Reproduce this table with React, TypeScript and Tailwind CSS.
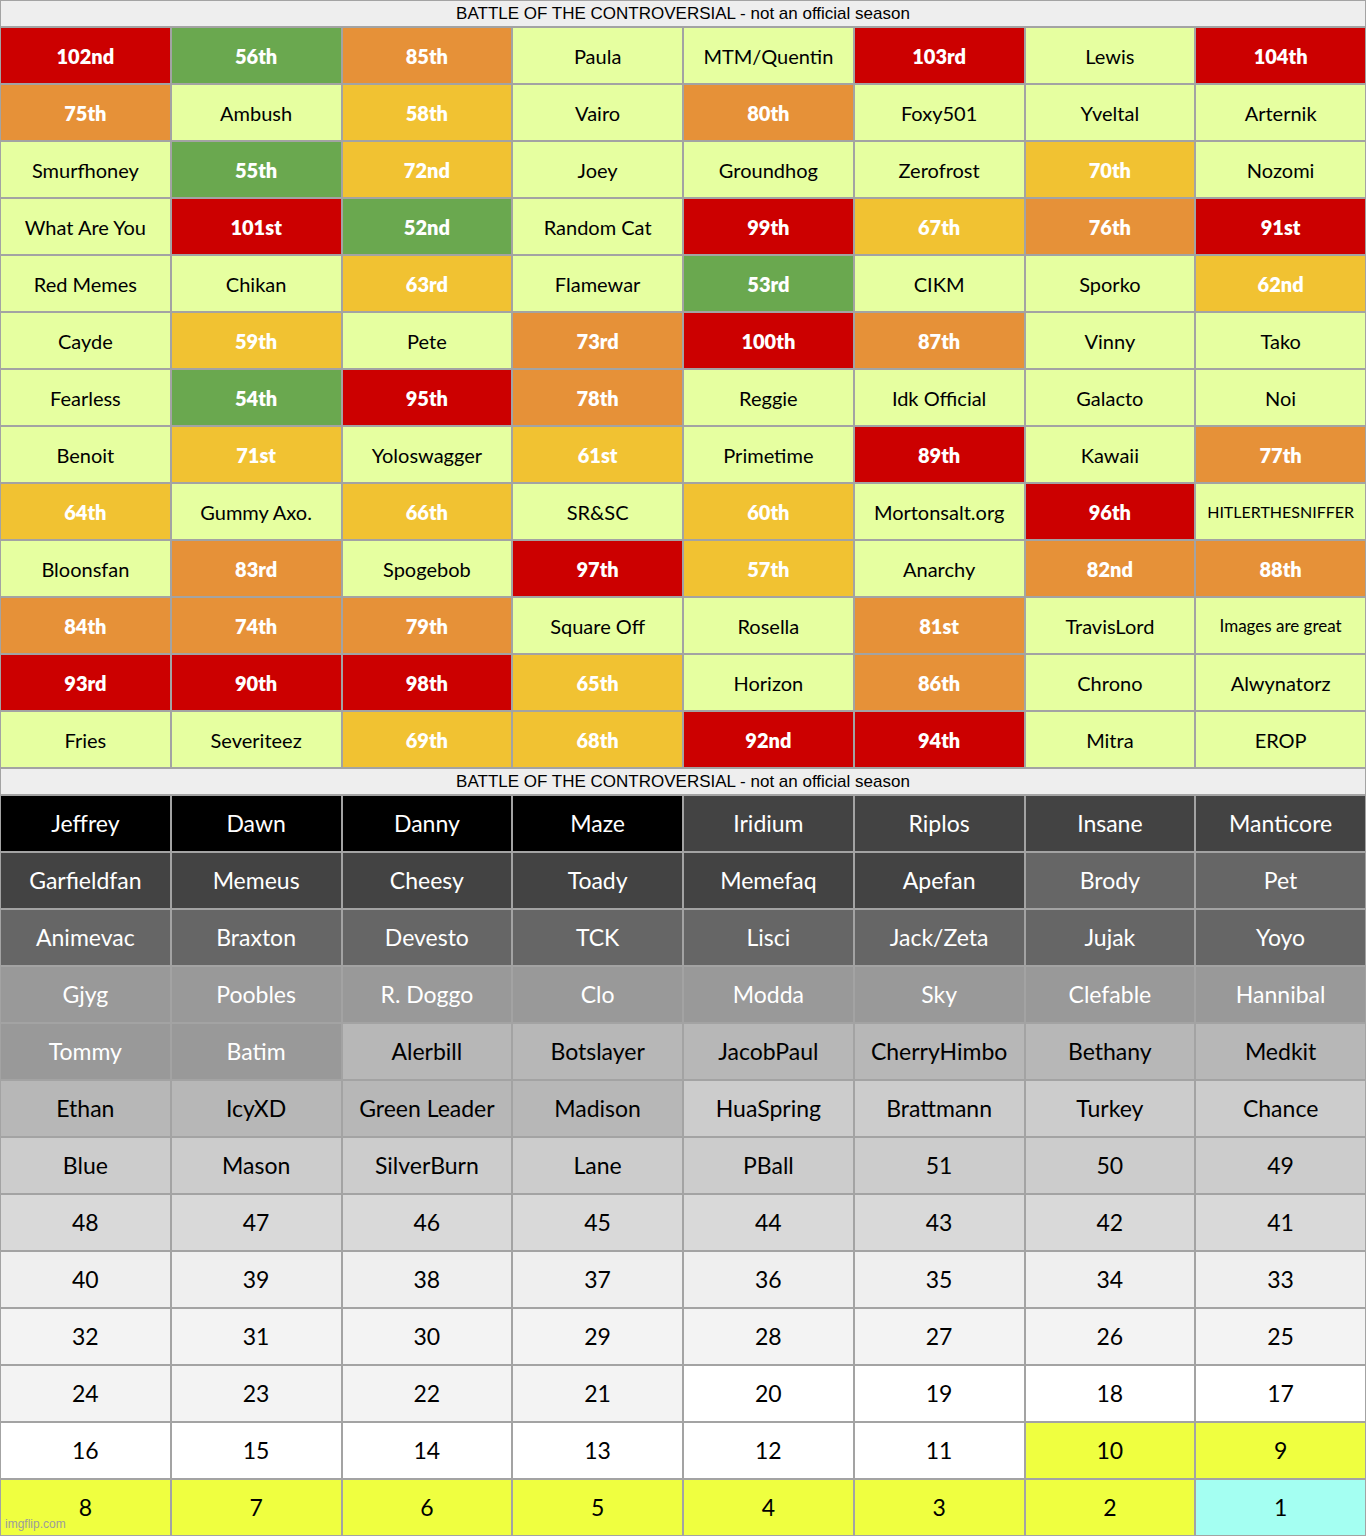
import React from "react";

type Cell = [string, string];

// colour keys for the rank board
const rankBg: Record<string, string> = {
  R: "bg-[#cc0000] text-white font-extrabold",
  G: "bg-[#6aa84f] text-white font-extrabold",
  O: "bg-[#e69138] text-white font-extrabold",
  Y: "bg-[#f1c232] text-white font-extrabold",
  L: "bg-[#e6ffa0] text-black",
};

const top: Cell[][] = [
  [["102nd", "R"], ["56th", "G"], ["85th", "O"], ["Paula", "L"], ["MTM/Quentin", "L"], ["103rd", "R"], ["Lewis", "L"], ["104th", "R"]],
  [["75th", "O"], ["Ambush", "L"], ["58th", "Y"], ["Vairo", "L"], ["80th", "O"], ["Foxy501", "L"], ["Yveltal", "L"], ["Arternik", "L"]],
  [["Smurfhoney", "L"], ["55th", "G"], ["72nd", "Y"], ["Joey", "L"], ["Groundhog", "L"], ["Zerofrost", "L"], ["70th", "Y"], ["Nozomi", "L"]],
  [["What Are You", "L"], ["101st", "R"], ["52nd", "G"], ["Random Cat", "L"], ["99th", "R"], ["67th", "Y"], ["76th", "O"], ["91st", "R"]],
  [["Red Memes", "L"], ["Chikan", "L"], ["63rd", "Y"], ["Flamewar", "L"], ["53rd", "G"], ["CIKM", "L"], ["Sporko", "L"], ["62nd", "Y"]],
  [["Cayde", "L"], ["59th", "Y"], ["Pete", "L"], ["73rd", "O"], ["100th", "R"], ["87th", "O"], ["Vinny", "L"], ["Tako", "L"]],
  [["Fearless", "L"], ["54th", "G"], ["95th", "R"], ["78th", "O"], ["Reggie", "L"], ["Idk Official", "L"], ["Galacto", "L"], ["Noi", "L"]],
  [["Benoit", "L"], ["71st", "Y"], ["Yoloswagger", "L"], ["61st", "Y"], ["Primetime", "L"], ["89th", "R"], ["Kawaii", "L"], ["77th", "O"]],
  [["64th", "Y"], ["Gummy Axo.", "L"], ["66th", "Y"], ["SR&SC", "L"], ["60th", "Y"], ["Mortonsalt.org", "L"], ["96th", "R"], ["HITLERTHESNIFFER", "L"]],
  [["Bloonsfan", "L"], ["83rd", "O"], ["Spogebob", "L"], ["97th", "R"], ["57th", "Y"], ["Anarchy", "L"], ["82nd", "O"], ["88th", "O"]],
  [["84th", "O"], ["74th", "O"], ["79th", "O"], ["Square Off", "L"], ["Rosella", "L"], ["81st", "O"], ["TravisLord", "L"], ["Images are great", "L"]],
  [["93rd", "R"], ["90th", "R"], ["98th", "R"], ["65th", "Y"], ["Horizon", "L"], ["86th", "O"], ["Chrono", "L"], ["Alwynatorz", "L"]],
  [["Fries", "L"], ["Severiteez", "L"], ["69th", "Y"], ["68th", "Y"], ["92nd", "R"], ["94th", "R"], ["Mitra", "L"], ["EROP", "L"]],
];

// greys for the placement board
const placeBg: Record<string, string> = {
  k: "bg-black text-white",
  d: "bg-[#434343] text-white",
  m: "bg-[#666666] text-white",
  g: "bg-[#999999] text-white",
  s: "bg-[#b7b7b7] text-black",
  c: "bg-[#cccccc] text-black",
  n: "bg-[#d9d9d9] text-black",
  e: "bg-[#efefef] text-black",
  f: "bg-[#f3f3f3] text-black",
  w: "bg-white text-black",
  y: "bg-[#efff40] text-black",
  a: "bg-[#a4fff2] text-black",
};

const bottom: Cell[][] = [
  [["Jeffrey", "k"], ["Dawn", "k"], ["Danny", "k"], ["Maze", "k"], ["Iridium", "d"], ["Riplos", "d"], ["Insane", "d"], ["Manticore", "d"]],
  [["Garfieldfan", "d"], ["Memeus", "d"], ["Cheesy", "d"], ["Toady", "d"], ["Memefaq", "d"], ["Apefan", "d"], ["Brody", "m"], ["Pet", "m"]],
  [["Animevac", "m"], ["Braxton", "m"], ["Devesto", "m"], ["TCK", "m"], ["Lisci", "m"], ["Jack/Zeta", "m"], ["Jujak", "m"], ["Yoyo", "m"]],
  [["Gjyg", "g"], ["Poobles", "g"], ["R. Doggo", "g"], ["Clo", "g"], ["Modda", "g"], ["Sky", "g"], ["Clefable", "g"], ["Hannibal", "g"]],
  [["Tommy", "g"], ["Batim", "g"], ["Alerbill", "s"], ["Botslayer", "s"], ["JacobPaul", "s"], ["CherryHimbo", "s"], ["Bethany", "s"], ["Medkit", "s"]],
  [["Ethan", "s"], ["IcyXD", "s"], ["Green Leader", "s"], ["Madison", "s"], ["HuaSpring", "c"], ["Brattmann", "c"], ["Turkey", "c"], ["Chance", "c"]],
  [["Blue", "c"], ["Mason", "c"], ["SilverBurn", "c"], ["Lane", "c"], ["PBall", "c"], ["51", "c"], ["50", "c"], ["49", "c"]],
  [["48", "n"], ["47", "n"], ["46", "n"], ["45", "n"], ["44", "n"], ["43", "n"], ["42", "n"], ["41", "n"]],
  [["40", "e"], ["39", "e"], ["38", "e"], ["37", "e"], ["36", "e"], ["35", "e"], ["34", "e"], ["33", "e"]],
  [["32", "f"], ["31", "f"], ["30", "f"], ["29", "f"], ["28", "f"], ["27", "f"], ["26", "f"], ["25", "f"]],
  [["24", "f"], ["23", "f"], ["22", "f"], ["21", "f"], ["20", "w"], ["19", "w"], ["18", "w"], ["17", "w"]],
  [["16", "w"], ["15", "w"], ["14", "w"], ["13", "w"], ["12", "w"], ["11", "w"], ["10", "y"], ["9", "y"]],
  [["8", "y"], ["7", "y"], ["6", "y"], ["5", "y"], ["4", "y"], ["3", "y"], ["2", "y"], ["1", "a"]],
];

function Title() {
  return (
    <div className="col-span-8 h-[25px] bg-[#eeeeee] flex items-center justify-center text-[17px] text-black font-['Liberation_Sans',Arial,sans-serif]">
      BATTLE OF THE CONTROVERSIAL - not an official season
    </div>
  );
}

function sizeFor(text: string) {
  if (text === "HITLERTHESNIFFER") return "text-[16px]";
  if (text === "Images are great") return "text-[17px]";
  return "text-[20px]";
}

export default function App() {
  return (
    <div className="relative w-[1366px] bg-[#a3a3a3] p-[1px] grid grid-cols-8 gap-[2px] font-['Lato','Open_Sans',sans-serif]">
      <Title />
      {top.flat().map(([text, c], i) => (
        <div key={"t" + i} className={`h-[55px] flex items-center justify-center ${sizeFor(text)} ${rankBg[c]}`}>
          {text}
        </div>
      ))}
      <Title />
      {bottom.flat().map(([text, c], i) => (
        <div key={"b" + i} className={`h-[55px] flex items-center justify-center text-[23px] ${placeBg[c]}`}>
          {text}
        </div>
      ))}
      <span className="absolute left-[5px] bottom-[3px] text-[12px] text-[#9c9c9c] font-['Liberation_Sans',Arial,sans-serif]">
        imgflip.com
      </span>
    </div>
  );
}
